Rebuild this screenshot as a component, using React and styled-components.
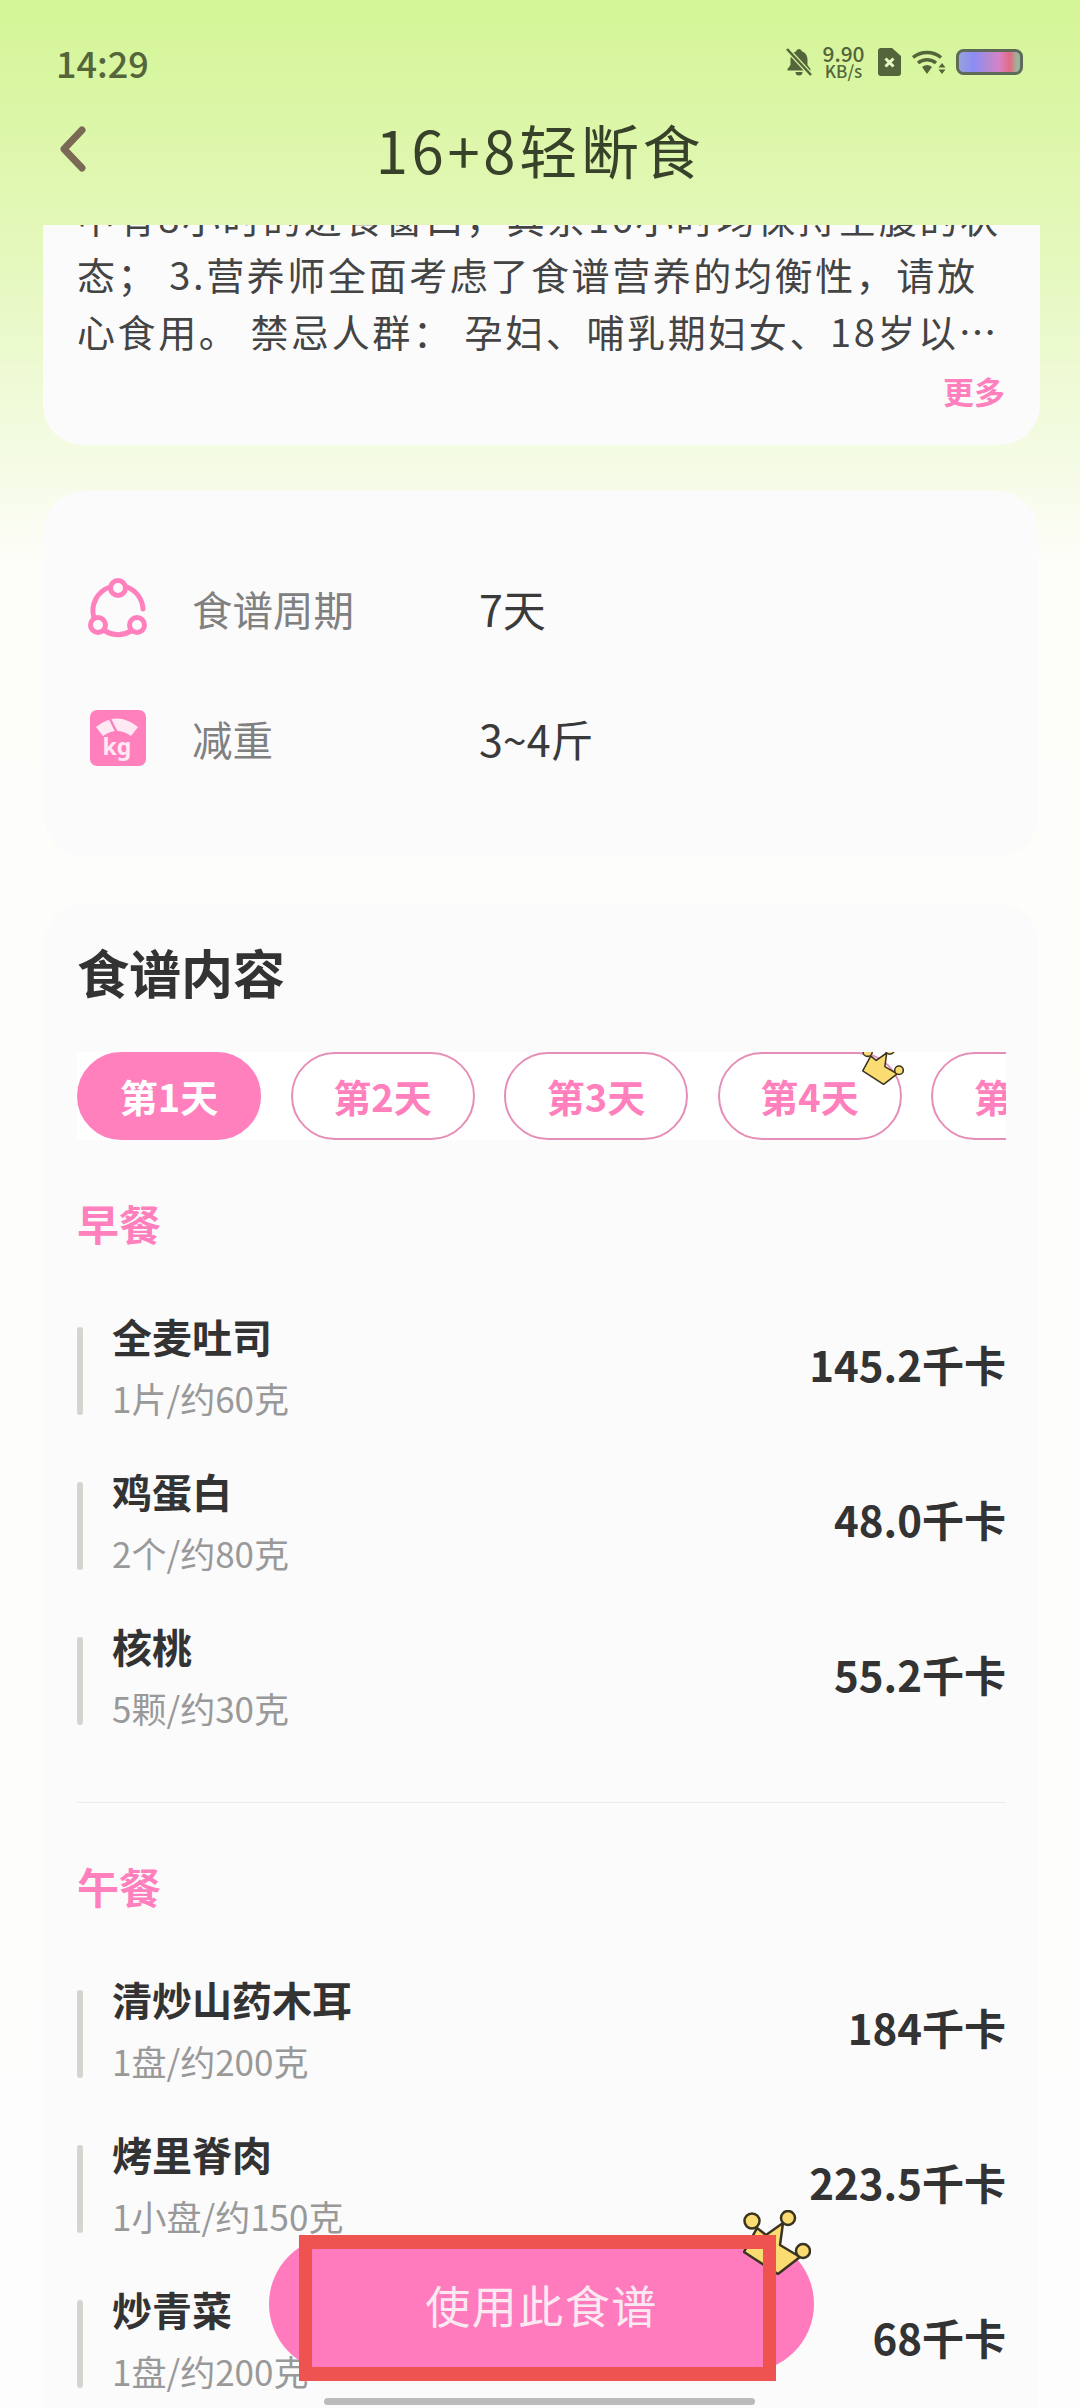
import React from "react";
import styled, { createGlobalStyle } from "styled-components";

const pink = "#ff80bd";
const fontStack = `"Noto Sans CJK SC", "Noto Sans", sans-serif`;

const GlobalStyle = createGlobalStyle`
  html, body {
    margin: 0;
    padding: 0;
    background: #fdfdfd;
  }
  * {
    box-sizing: border-box;
  }
`;

const Page = styled.div`
  position: relative;
  display: flex;
  flex-direction: column;
  width: 1080px;
  height: 2408px;
  overflow: hidden;
  font-family: ${fontStack};
  background: linear-gradient(#d4f596 0, #e4f8bb 250px, #fdfdfa 570px, #fdfdfd 100%);
`;

const Header = styled.header`
  flex: none;
  height: 225px;
`;

const StatusBar = styled.div`
  display: flex;
  align-items: center;
  justify-content: space-between;
  height: 44px;
  margin-top: 40px;
  padding: 0 57px 0 56px;
  color: #55653b;
`;

const Time = styled.span`
  font-size: 36px;
  font-weight: 500;
  line-height: 44px;
`;

const StatusIcons = styled.div`
  display: flex;
  align-items: center;
`;

const Speed = styled.div`
  display: flex;
  flex-direction: column;
  align-items: center;
  width: 43px;
  margin: 0 13px 0 10px;
  font-weight: 500;
  line-height: 17px;
  span:first-child {
    font-size: 21px;
  }
  span:last-child {
    font-size: 17px;
  }
`;

const NavBar = styled.div`
  position: relative;
  display: flex;
  align-items: center;
  justify-content: center;
  height: 60px;
  margin-top: 35px;
`;

const BackIcon = styled.svg`
  position: absolute;
  left: 57px;
  top: 7px;
`;

const Title = styled.h1`
  margin: 0;
  font-size: 58px;
  font-weight: 400;
  letter-spacing: 3.7px;
  color: #38412a;
`;

const ScrollArea = styled.main`
  flex: 1;
  min-height: 0;
  overflow: hidden;
`;

const Card = styled.section`
  margin: ${(p) => p.$margin};
  padding: ${(p) => p.$padding};
  height: ${(p) => p.$height};
  background: #fbfbfc;
  border-radius: 40px;
`;

const Intro = styled.p`
  margin: 0;
  font-size: 38px;
  line-height: 57px;
  letter-spacing: 2.6px;
  color: #444;
  white-space: nowrap;
`;

const More = styled.div`
  margin-top: 12px;
  text-align: right;
  font-size: 31px;
  font-weight: 700;
  line-height: 40px;
  color: ${pink};
`;

const InfoRow = styled.div`
  display: flex;
  align-items: center;
  height: 60px;
  & + & {
    margin-top: 70px;
  }
`;

const InfoIcon = styled.svg`
  flex: none;
  margin-right: 44px;
`;

const InfoLabel = styled.span`
  width: 287px;
  font-size: 40.5px;
  color: #808080;
`;

const InfoValue = styled.span`
  font-size: 43px;
  color: #3a3a3a;
`;

const CardTitle = styled.h2`
  margin: 0;
  font-size: 52px;
  font-weight: 700;
  line-height: 72px;
  color: #333;
`;

const TabStrip = styled.div`
  display: flex;
  gap: 29.5px;
  height: 88px;
  margin-top: 44px;
  overflow: hidden;
  background: #fff;
`;

const Tab = styled.div`
  position: relative;
  flex: none;
  display: flex;
  align-items: center;
  justify-content: center;
  width: 184px;
  height: 88px;
  padding-bottom: 2px;
  border-radius: 44px;
  border: 2.5px solid ${(p) => (p.$active ? pink : "#e58fb8")};
  background: ${(p) => (p.$active ? pink : "#fff")};
  color: ${(p) => (p.$active ? "#fff" : pink)};
  font-size: 38px;
  font-weight: 700;
`;

const TabCrown = styled.svg`
  position: absolute;
  top: -9px;
  left: 142px;
`;

const MealTitle = styled.h3`
  margin: 53px 0 0;
  font-size: 42px;
  font-weight: 700;
  line-height: 60px;
  color: ${pink};
`;

const MealList = styled.div`
  display: flex;
  flex-direction: column;
  gap: 67px;
  margin-top: 74px;
`;

const MealRow = styled.div`
  display: flex;
  align-items: center;
  height: 88px;
`;

const MealBar = styled.div`
  flex: none;
  align-self: stretch;
  width: 6px;
  margin-right: 29px;
  border-radius: 3px;
  background: #d5d5d0;
`;

const MealText = styled.div`
  flex: 1;
  display: flex;
  flex-direction: column;
  gap: 14px;
  margin-top: -8px;
`;

const MealName = styled.div`
  font-size: 40px;
  font-weight: 700;
  line-height: 48px;
  color: #333;
`;

const MealAmount = styled.div`
  font-size: 35px;
  line-height: 48px;
  color: #999;
`;

const MealEnergy = styled.div`
  margin-top: -16px;
  font-size: 42px;
  font-weight: 700;
  color: #333;
`;

const Divider = styled.hr`
  height: 1px;
  margin: 77px 0 0;
  border: none;
  background: #ececec;
`;

const UseButton = styled.button`
  position: absolute;
  left: 269px;
  top: 2236px;
  width: 545px;
  height: 136px;
  padding: 0;
  border: none;
  border-radius: 68px;
  background: #ff7bbd;
  color: #fbe9f2;
  font-family: inherit;
  font-size: 45px;
  letter-spacing: 1.5px;
`;

const ButtonCrown = styled.svg`
  position: absolute;
  left: 743px;
  top: 2210px;
`;

const Annotation = styled.div`
  position: absolute;
  left: 299px;
  top: 2235px;
  width: 477px;
  height: 146px;
  border: 14px solid #ef5350;
  border-width: 14px 13px;
`;

const HomeBar = styled.div`
  position: absolute;
  left: 324px;
  top: 2398px;
  width: 431px;
  height: 7px;
  border-radius: 4px;
  background: #bbb;
`;

const days = ["第1天", "第2天", "第3天", "第4天", "第5天"];

const meals = [
  {
    title: "早餐",
    items: [
      { name: "全麦吐司", amount: "1片/约60克", energy: "145.2千卡" },
      { name: "鸡蛋白", amount: "2个/约80克", energy: "48.0千卡" },
      { name: "核桃", amount: "5颗/约30克", energy: "55.2千卡" },
    ],
  },
  {
    title: "午餐",
    items: [
      { name: "清炒山药木耳", amount: "1盘/约200克", energy: "184千卡" },
      { name: "烤里脊肉", amount: "1小盘/约150克", energy: "223.5千卡" },
      { name: "炒青菜", amount: "1盘/约200克", energy: "68千卡" },
    ],
  },
];

const CrownShape = () => (
  <g stroke="#3a3320" strokeWidth="2.5" strokeLinejoin="round" fill="#fbdc72">
    <path d="M1 42 L35 64 L57 47 L37 35 L40 13 L23 25 L14 18 Z" />
    <circle cx="9" cy="11" r="7.5" />
    <circle cx="45" cy="8" r="7" />
    <circle cx="60" cy="41" r="7" />
  </g>
);

const App = () => (
  <React.Fragment>
    <GlobalStyle />
    <Page>
      <Header>
        <StatusBar>
          <Time>14:29</Time>
          <StatusIcons>
            <svg width="26" height="28" viewBox="0 0 26 28">
              <path
                fill="currentColor"
                d="M13 1a3 3 0 0 1 3 2.5c4 1.2 5.5 4.6 5.5 8.5v5l3 4v1.500H1.500V21l3-4v-5c0-4 1.500-7.300 5.500-8.500A3 3 0 0 1 13 1zM9.500 24h7a3.500 3.500 0 0 1-7 0z"
              />
              <path d="M1 1 L25 27" stroke="#d5f49c" strokeWidth="5" />
              <path d="M1 1 L25 27" stroke="currentColor" strokeWidth="2.500" />
            </svg>
            <Speed>
              <span>9.90</span>
              <span>KB/s</span>
            </Speed>
            <svg width="23" height="28" viewBox="0 0 23 28">
              <path
                fill="currentColor"
                d="M3 0h11l9 8v17a3 3 0 0 1-3 3H3a3 3 0 0 1-3-3V3a3 3 0 0 1 3-3z"
              />
              <path d="M7.500 10.500l8 8M15.500 10.500l-8 8" stroke="#e6f8c4" strokeWidth="3" />
            </svg>
            <svg width="34" height="26" viewBox="0 0 34 26" style={{ margin: "0 10px 0 11px" }}>
              <g fill="none" stroke="currentColor" strokeWidth="3.500">
                <path d="M1 8.500a22 22 0 0 1 28 0" />
                <path d="M6 14a14 14 0 0 1 18 0" />
              </g>
              <path fill="currentColor" d="M10 18a8 8 0 0 1 10 0l-5 7z" />
              <path fill="currentColor" d="M30 14l3.500 4.500h-7zM30 25l-3.500-4.500h7z" />
            </svg>
            <svg width="67" height="26" viewBox="0 0 67 26">
              <defs>
                <linearGradient id="batteryFill">
                  <stop offset="0" stopColor="#99a4d8" />
                  <stop offset="0.25" stopColor="#8c8cf5" />
                  <stop offset="0.5" stopColor="#b68ad0" />
                  <stop offset="0.65" stopColor="#d682c8" />
                  <stop offset="0.82" stopColor="#e26a80" />
                  <stop offset="0.92" stopColor="#a0b09a" />
                </linearGradient>
              </defs>
              <rect
                x="1.500"
                y="1.500"
                width="64"
                height="23"
                rx="6"
                fill="url(#batteryFill)"
                stroke="#5f6b58"
                strokeWidth="3"
              />
            </svg>
          </StatusIcons>
        </StatusBar>
        <NavBar>
          <BackIcon width="32" height="46" viewBox="0 0 32 46">
            <path
              d="M25 4 L7 23 L25 42"
              fill="none"
              stroke="#7a6a55"
              strokeWidth="7"
              strokeLinecap="round"
              strokeLinejoin="round"
            />
          </BackIcon>
          <Title>16+8轻断食</Title>
        </NavBar>
      </Header>
      <ScrollArea>
        <Card $margin="-40px 40px 0 43px" $padding="3px 35px 0 34px" $height="260px">
          <Intro>中有8小时的进食窗口，其余16小时均保持空腹的状</Intro>
          <Intro>态； 3.营养师全面考虑了食谱营养的均衡性，请放</Intro>
          <Intro>心食用。 禁忌人群： 孕妇、哺乳期妇女、18岁以…</Intro>
          <More>更多</More>
        </Card>
        <Card $margin="46px 42px 0 44px" $padding="87px 0 0 44px" $height="366px">
          <InfoRow>
            <InfoIcon width="60" height="60" viewBox="0 0 60 60">
              <g fill="none" stroke="#ff80bd" strokeWidth="5" strokeLinecap="round">
                <path d="M6 40 A25 25 0 0 1 22 9" />
                <path d="M39 9 A25 25 0 0 1 55 31" />
                <path d="M17 53 A25 25 0 0 0 43 53" />
                <circle cx="30" cy="10" r="7.500" />
                <circle cx="10" cy="47" r="7.500" />
                <circle cx="49" cy="47" r="7.500" />
              </g>
            </InfoIcon>
            <InfoLabel>食谱周期</InfoLabel>
            <InfoValue>7天</InfoValue>
          </InfoRow>
          <InfoRow>
            <InfoIcon width="60" height="60" viewBox="0 0 60 60">
              <rect x="2" y="2" width="56" height="56" rx="7" fill="#ff80bd" />
              <path
                fill="#ffeaf4"
                d="M8 19 Q29 2 50 19 L43 28 Q29 18 15 28 Z"
              />
              <path d="M22 11 L30 27" stroke="#ff80bd" strokeWidth="2.500" />
              <text
                x="29"
                y="47"
                textAnchor="middle"
                fontFamily="Noto Sans, sans-serif"
                fontWeight="700"
                fontSize="23"
                fill="#ffeaf4"
              >
                kg
              </text>
            </InfoIcon>
            <InfoLabel>减重</InfoLabel>
            <InfoValue>3~4斤</InfoValue>
          </InfoRow>
        </Card>
        <Card $margin="46px 42px 0 44px" $padding="33px 32px 120px 33px">
          <CardTitle>食谱内容</CardTitle>
          <TabStrip>
            {days.map((day, i) => (
              <Tab key={day} $active={i === 0}>
                {day}
                {i === 3 && (
                  <TabCrown width="42" height="40" viewBox="0 0 68 65">
                    <CrownShape />
                  </TabCrown>
                )}
              </Tab>
            ))}
          </TabStrip>
          {meals.map((meal, i) => (
            <React.Fragment key={meal.title}>
              {i > 0 && <Divider />}
              <MealTitle>{meal.title}</MealTitle>
              <MealList>
                {meal.items.map((item) => (
                  <MealRow key={item.name}>
                    <MealBar />
                    <MealText>
                      <MealName>{item.name}</MealName>
                      <MealAmount>{item.amount}</MealAmount>
                    </MealText>
                    <MealEnergy>{item.energy}</MealEnergy>
                  </MealRow>
                ))}
              </MealList>
            </React.Fragment>
          ))}
        </Card>
      </ScrollArea>
      <UseButton>使用此食谱</UseButton>
      <ButtonCrown width="68" height="65" viewBox="0 0 68 65">
        <CrownShape />
      </ButtonCrown>
      <Annotation />
      <HomeBar />
    </Page>
  </React.Fragment>
);

export default App;
